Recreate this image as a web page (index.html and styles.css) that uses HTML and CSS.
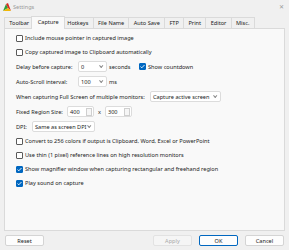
FILE: index.html
```html
<!DOCTYPE html>
<html lang="en">
<head>
    <meta charset="UTF-8">
    <title>Settings</title>
    <link rel="stylesheet" href="styles.css">
</head>
<body>
    <div class="window">
        <div class="titlebar">
            <svg class="app-icon" width="8" height="8" viewBox="0 0 8 8">
                <path d="M0 8 L3 1 L5 5 Z" fill="#2e9e3c"/>
                <path d="M3 1 L5 0 L8 8 L5 5 Z" fill="#d62b20"/>
                <path d="M0 8 L5 5 L8 8 Z" fill="#f2b705"/>
            </svg>
            <span class="title">Settings</span>
            <span class="close">&#x2715;</span>
        </div>

        <!-- Tabs -->
        <div class="tabs">
            <div class="tab">Toolbar</div>
            <div class="tab active">Capture</div>
            <div class="tab">Hotkeys</div>
            <div class="tab">File Name</div>
            <div class="tab">Auto Save</div>
            <div class="tab">FTP</div>
            <div class="tab">Print</div>
            <div class="tab">Editor</div>
            <div class="tab">Misc.</div>
        </div>

        <div class="panel">
            <div class="row check-row"><span class="check"></span>Include mouse pointer in captured image</div>
            <div class="row check-row"><span class="check"></span>Copy captured image to Clipboard automatically</div>
            <div class="row field-row">
                <span class="label">Delay before capture:</span>
                <span class="combo combo-small">0<span class="arrow"></span></span>
                <span class="unit">seconds</span>
                <span class="check checked"></span>Show countdown
            </div>
            <div class="row field-row">
                <span class="label">Auto-Scroll interval:</span>
                <span class="combo combo-small">100<span class="arrow"></span></span>
                <span class="unit">ms</span>
            </div>
            <div class="row field-row">
                <span class="label-wide">When capturing Full Screen of multiple monitors:</span>
                <span class="combo combo-monitor">Capture active screen<span class="arrow"></span></span>
            </div>
            <div class="row field-row">
                <span class="label-size">Fixed Region Size:</span>
                <span class="spin">400<span class="spin-btn"></span></span>
                <span class="times">x</span>
                <span class="spin">300<span class="spin-btn"></span></span>
            </div>
            <div class="row field-row">
                <span class="label-dpi">DPI:</span>
                <span class="combo combo-dpi">Same as screen DPI<span class="arrow"></span></span>
            </div>
            <div class="row check-row"><span class="check"></span>Convert to 256 colors if output is Clipboard, Word, Excel or PowerPoint</div>
            <div class="row check-row"><span class="check"></span>Use thin (1 pixel) reference lines on high resolution monitors</div>
            <div class="row check-row"><span class="check checked"></span>Show magnifier window when capturing rectangular and freehand region</div>
            <div class="row check-row"><span class="check checked"></span>Play sound on capture</div>
        </div>

        <div class="buttons">
            <button class="btn">Reset</button>
            <div class="spacer"></div>
            <button class="btn" disabled>Apply</button>
            <button class="btn default">OK</button>
            <button class="btn">Cancel</button>
        </div>
    </div>
</body>
</html>
```

FILE: styles.css
```css
* {
    margin: 0;
    padding: 0;
    box-sizing: border-box;
}
body {
    font-family: 'Noto Sans', 'Open Sans', sans-serif;
    font-size: 5.6px;
    color: #1b1b1b;
    background: #f0f0f0;
    width: 289px;
    height: 250px;
    overflow: hidden;
}
.window {
    display: flex;
    flex-direction: column;
    height: 250px;
}

/* Title bar */
.titlebar {
    height: 14px;
    display: flex;
    align-items: center;
    padding-left: 3px;
}
.app-icon {
    margin-right: 2px;
}
.title {
    color: #9a9a9a;
}
.close {
    margin-left: auto;
    margin-right: 5px;
    color: #9a9a9a;
    font-size: 6px;
}

/* Tabs */
.tabs {
    display: flex;
    align-items: flex-end;
    height: 14px;
    padding-left: 5px;
}
.tab {
    height: 11px;
    line-height: 10px;
    padding: 0 4.3px;
    border: 1px solid #dadada;
    border-bottom: none;
    margin-left: -1px;
    background: #f0f0f0;
}
.tab.active {
    height: 13px;
    line-height: 11px;
    margin: 0 -2px -1px -3px;
    padding: 0 5.3px;
    background: #f9f9f9;
    position: relative;
    z-index: 1;
}

/* Tab page */
.panel {
    margin: 0 4px;
    height: 203px;
    border: 1px solid #dadada;
    background: #f9f9f9;
    padding: 2px 0 0 11px;
}
.row {
    display: flex;
    align-items: center;
    white-space: nowrap;
}
.check-row {
    height: 14px;
}
.field-row {
    height: 15px;
}
.check {
    width: 7px;
    height: 7px;
    border: 1px solid #5a5a5a;
    border-radius: 1px;
    background: #fff;
    margin-right: 2px;
    flex-shrink: 0;
}
.check.checked {
    border-color: #0067c0;
    background: #0067c0 url("data:image/svg+xml,%3Csvg xmlns='http://www.w3.org/2000/svg' viewBox='0 0 7 7'%3E%3Cpath d='M1.5 3.6 L2.8 4.8 L5.5 2' stroke='white' stroke-width='0.9' fill='none'/%3E%3C/svg%3E") center / 7px 7px no-repeat;
}
.label {
    width: 62px;
}
.label-wide {
    width: 134px;
}
.label-size {
    width: 51px;
}
.label-dpi {
    width: 16px;
}
.combo {
    height: 11px;
    display: flex;
    align-items: center;
    background: #fff;
    border: 1px solid #dcdcdc;
    border-radius: 2px;
    padding-left: 2px;
}
.arrow {
    margin-left: auto;
    margin-right: 4px;
    width: 3px;
    height: 3px;
    border-right: 1px solid #8a8a8a;
    border-bottom: 1px solid #8a8a8a;
    transform: rotate(45deg) translateY(-1px);
}
.combo-small {
    width: 29px;
}
.combo-monitor {
    width: 71px;
}
.combo-dpi {
    width: 63px;
}
.unit {
    margin-left: 2px;
    width: 30px;
}
.spin {
    width: 27px;
    height: 11px;
    display: flex;
    align-items: center;
    background: #fff;
    border: 1px solid #dcdcdc;
    border-radius: 2px;
    padding-left: 2px;
}
.spin-btn {
    margin-left: auto;
    margin-right: 1px;
    width: 6px;
    height: 8px;
    border: 1px solid #cfcfcf;
    background: #f6f6f6;
}
.times {
    margin: 0 4px;
}

/* Bottom buttons */
.buttons {
    display: flex;
    padding: 4px 5px 0 5px;
}
.spacer {
    flex: 1;
}
.btn {
    width: 39px;
    height: 11px;
    font-family: inherit;
    font-size: 5.6px;
    color: #1b1b1b;
    background: #fdfdfd;
    border: 1px solid #d4d4d4;
    border-radius: 2px;
    margin-left: 7px;
}
.btn:first-child {
    margin-left: 0;
}
.btn:disabled {
    color: #a8a8a8;
    background: #f5f5f5;
    border-color: #e2e2e2;
}
.btn.default {
    border-color: #0067c0;
}
```
